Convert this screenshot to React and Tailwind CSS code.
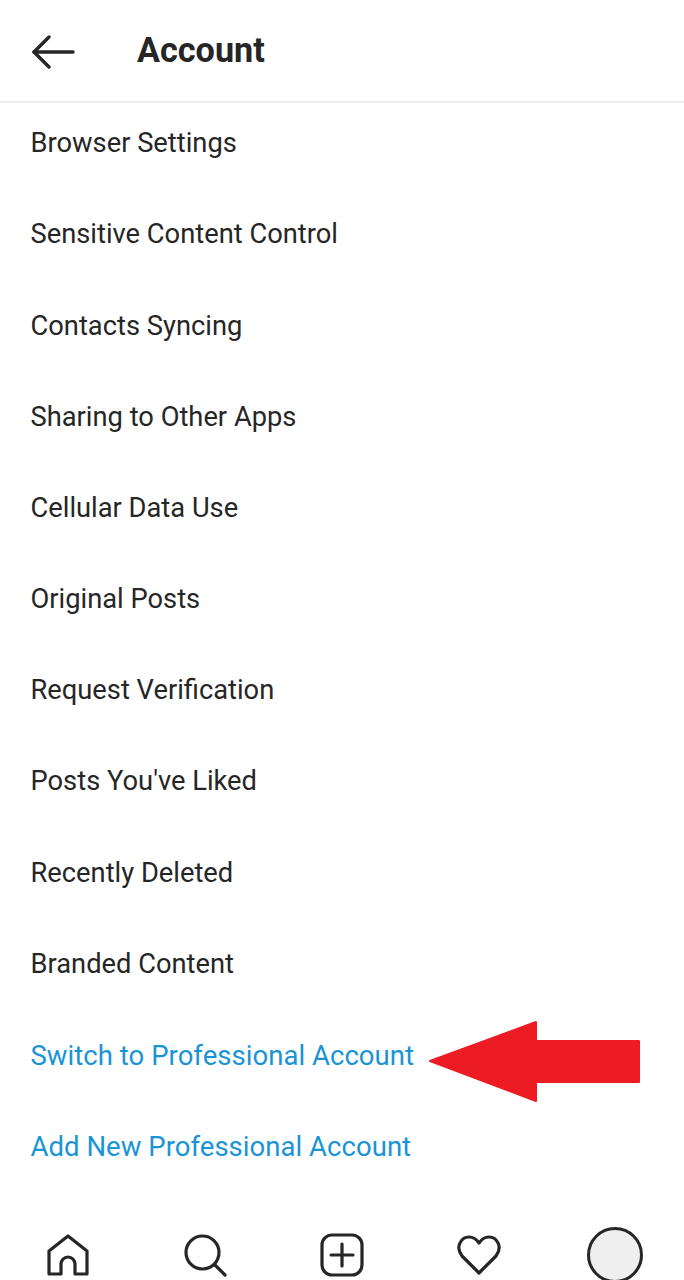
import React from "react";

const ROWS = [
  "Browser Settings",
  "Sensitive Content Control",
  "Contacts Syncing",
  "Sharing to Other Apps",
  "Cellular Data Use",
  "Original Posts",
  "Request Verification",
  "Posts You've Liked",
  "Recently Deleted",
  "Branded Content",
];

const LINKS = ["Switch to Professional Account", "Add New Professional Account"];

const NavIcon = ({ children }) => (
  <svg width="46" height="46" viewBox="0 0 46 46" fill="none" stroke="#262626" strokeWidth="3.2" strokeLinecap="round" strokeLinejoin="round">
    {children}
  </svg>
);

const App = () => {
  return (
    <div className="relative w-[684px] h-[1280px] overflow-hidden bg-white flex flex-col font-['Roboto',sans-serif]">
      {/* Header */}
      <div className="relative z-10 h-[103px] shrink-0 flex items-center gap-[62px] pl-[32px] bg-white border-b-2 border-[#ececec]">
        <svg className="translate-y-[1px]" width="43" height="34" viewBox="0 0 43 34" fill="none" stroke="#262626" strokeWidth="3.4" strokeLinecap="round" strokeLinejoin="round">
          <path d="M41 17H2" />
          <path d="M17 2 2 17l15 15" />
        </svg>
        <h1 className="text-[34.2px] font-bold text-[#262626]">Account</h1>
      </div>

      {/* Rows */}
      <div className="-mt-[5px] flex-1 flex flex-col">
        {ROWS.map((row) => (
          <div key={row} className="h-[91.2px] shrink-0 flex items-center pl-[30.5px] text-[27.3px] text-[#262626]">
            {row}
          </div>
        ))}
        {LINKS.map((link) => (
          <div key={link} className="h-[91.2px] shrink-0 flex items-center pl-[30.5px] text-[27.5px] tracking-[0.04px] text-[#1a94d6]">
            {link}
          </div>
        ))}
      </div>

      {/* Red arrow annotation */}
      <svg className="absolute left-[428px] top-[1020px]" width="212" height="82" viewBox="0 0 212 82">
        <path d="M2 41 108 2v19h103v41H108v19z" fill="#ed1c24" stroke="#ed1c24" strokeWidth="2" strokeLinejoin="round" />
      </svg>

      {/* Bottom nav */}
      <div className="absolute left-0 right-0 top-[1227px] h-[56px] grid grid-cols-5 justify-items-center items-center">
        <NavIcon>
          <path d="M4 42V19L23 4l19 15v23H30V32a7 7 0 0 0-14 0v10z" />
        </NavIcon>
        <NavIcon>
          <circle cx="20.5" cy="20.5" r="16.5" />
          <path d="m33 33 10 10" />
        </NavIcon>
        <NavIcon>
          <rect x="3" y="3" width="40" height="40" rx="10" />
          <path d="M23 12v22M12 23h22" />
        </NavIcon>
        <NavIcon>
          <path d="M23 41 6 24C-1 15 5 5 13 5c5 0 8 3 10 6 2-3 5-6 10-6 8 0 14 10 7 19z" />
        </NavIcon>
        <div className="w-[56px] h-[56px] mr-[2px] rounded-full bg-[#efefef] border-[3px] border-[#262626]" />
      </div>
    </div>
  );
};

export default App;
